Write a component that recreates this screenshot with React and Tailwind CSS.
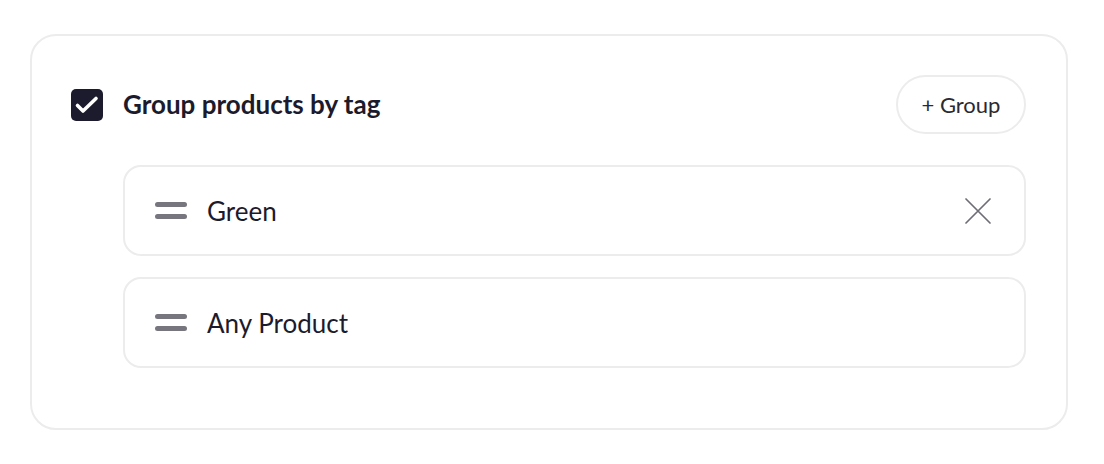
const groups = [
  { id: 1, label: "Green", removable: true },
  { id: 2, label: "Any Product", removable: false },
];

function DragHandle() {
  return (
    <div className="flex flex-col gap-[7px] w-8 shrink-0">
      <span className="block h-[5px] w-8 rounded-full bg-[#77767f]" />
      <span className="block h-[5px] w-8 rounded-full bg-[#77767f]" />
    </div>
  );
}

export default function App() {
  return (
    <div
      className="bg-white min-h-[464px] pt-[34px] pl-[30px]"
      style={{ fontFamily: "Lato, 'Open Sans', sans-serif" }}
    >
      <div className="w-[1038px] h-[396px] rounded-[26px] border-2 border-[#ececec] pt-[39px] pl-[39px] pr-[40px] text-[#1c1b2d]">
        {/* header */}
        <div className="flex items-center justify-between h-[59px]">
          <div className="flex items-center gap-5">
            <div className="w-8 h-8 rounded-[5px] bg-[#1c1b2d] flex items-center justify-center">
              <svg width="32" height="32" viewBox="0 0 32 32" fill="none">
                <path
                  d="M6.5 16.5l5.5 5.5L25 9.5"
                  stroke="white"
                  strokeWidth="3.6"
                  strokeLinecap="round"
                  strokeLinejoin="round"
                />
              </svg>
            </div>
            <span className="text-[26px] font-bold">Group products by tag</span>
          </div>
          <button className="h-[59px] w-[130px] rounded-full border-2 border-[#ececec] text-[22px] text-[#2a2a33] flex items-center justify-center">
            + Group
          </button>
        </div>

        {/* groups */}
        <div className="ml-[52px] mt-[31px] flex flex-col gap-[21px]">
          {groups.map((g) => (
            <div
              key={g.id}
              className="h-[91px] rounded-[18px] border-2 border-[#ececec] flex items-center pl-[30px] pr-[33px]"
            >
              <DragHandle />
              <span className="ml-5 text-[26px] flex-1 pt-[2px]">{g.label}</span>
              {g.removable && (
                <svg width="26" height="26" viewBox="0 0 26 26" fill="none">
                  <path
                    d="M1 1l24 24M25 1L1 25"
                    stroke="#6e6d76"
                    strokeWidth="1.7"
                    strokeLinecap="round"
                  />
                </svg>
              )}
            </div>
          ))}
        </div>
      </div>
    </div>
  );
}
